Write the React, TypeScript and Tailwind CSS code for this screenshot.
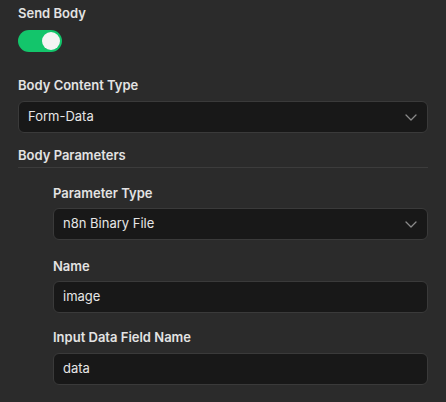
import React, { useState } from 'react';

const Chevron: React.FC = () => (
  <svg width="12" height="7" viewBox="0 0 12 7" fill="none" className="shrink-0">
    <path d="M1 1l5 5 5-5" stroke="#8a8a8a" strokeWidth="1.3" strokeLinecap="round" strokeLinejoin="round" />
  </svg>
);

const Label: React.FC<{ children: React.ReactNode; className?: string }> = ({ children, className = '' }) => (
  <div className={`text-[13px] leading-[18px] font-semibold text-[#e3e3e3] ${className}`}>{children}</div>
);

const SelectBox: React.FC<{ value: string; className?: string }> = ({ value, className = '' }) => (
  <div className={`h-[32px] flex items-center justify-between rounded-[6px] border border-[#3a3a3a] bg-[#181818] pl-[9px] pr-[10px] ${className}`}>
    <span className="text-[13px] text-[#e6e6e6]">{value}</span>
    <Chevron />
  </div>
);

const TextBox: React.FC<{ value: string; className?: string }> = ({ value, className = '' }) => (
  <div className={`h-[32px] flex items-center rounded-[6px] border border-[#3a3a3a] bg-[#181818] pl-[9px] ${className}`}>
    <span className="text-[13px] text-[#e6e6e6]">{value}</span>
  </div>
);

export default function App() {
  const [sendBody, setSendBody] = useState(true);

  return (
    <div className="w-[446px] h-[402px] bg-[#2b2b2b] px-[18px] pt-[4px] overflow-hidden" style={{ fontFamily: 'Inter, "Noto Sans", sans-serif' }}>
      <Label>Send Body</Label>
      <button
        onClick={() => setSendBody(!sendBody)}
        className={`mt-[8px] w-[44px] h-[22px] rounded-full flex items-center px-[2px] ${sendBody ? 'bg-[#13c56b] justify-end' : 'bg-[#555] justify-start'}`}
      >
        <span className="w-[18px] h-[18px] rounded-full bg-[#f4f4f4]" />
      </button>

      <Label className="mt-[24px]">Body Content Type</Label>
      <SelectBox value="Form-Data" className="mt-[7px]" />

      <Label className="mt-[13px] pb-[3px] border-b border-[#3c3c3c]">Body Parameters</Label>

      <div className="pl-[35px]">
        <Label className="mt-[16px]">Parameter Type</Label>
        <SelectBox value="n8n Binary File" className="mt-[6px]" />

        <Label className="mt-[17px]">Name</Label>
        <TextBox value="image" className="mt-[6px]" />

        <Label className="mt-[15px]">Input Data Field Name</Label>
        <TextBox value="data" className="mt-[7px]" />
      </div>
    </div>
  );
}
